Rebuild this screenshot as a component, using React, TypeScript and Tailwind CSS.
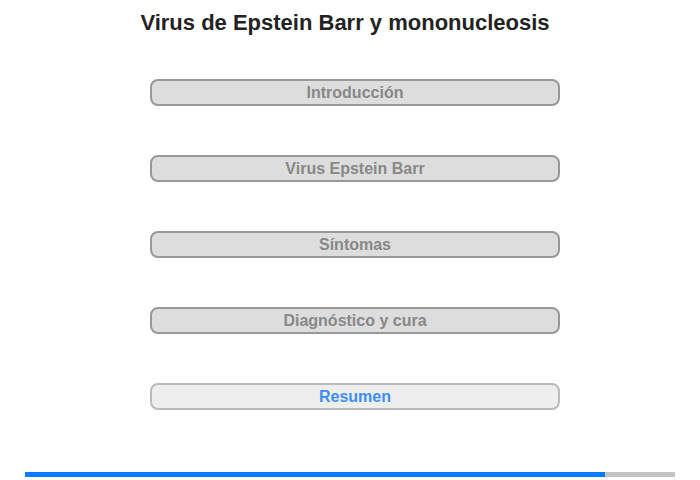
const items = ["Introducción", "Virus Epstein Barr", "Síntomas", "Diagnóstico y cura"];

export default function App() {
  return (
    <div className="w-[700px] h-[480px] bg-white flex flex-col items-center font-['Liberation_Sans',Arial,sans-serif]">
      <h1 className="mt-[10px] mr-[10px] h-[26px] leading-[26px] text-[22px] font-bold text-[#222222]">
        Virus de Epstein Barr y mononucleosis
      </h1>
      <div className="mt-[43px] ml-[10px] flex flex-col gap-[49px]">
        {items.map((t) => (
          <button
            key={t}
            className="w-[410px] h-[27px] rounded-[8px] border-2 border-[#999999] bg-[#dddddd] text-[16px] font-bold text-[#888888] leading-none"
          >
            {t}
          </button>
        ))}
        <button className="w-[410px] h-[27px] rounded-[8px] border-2 border-[#bbbbbb] bg-[#eeeeee] text-[16px] font-bold text-[#3d8ef7] leading-none">
          Resumen
        </button>
      </div>
      <div className="mt-[62px] w-[650px] h-[5px] bg-[#c4c4c4] flex">
        <div className="w-[580px] h-full bg-[#087bff]" />
      </div>
    </div>
  );
}
